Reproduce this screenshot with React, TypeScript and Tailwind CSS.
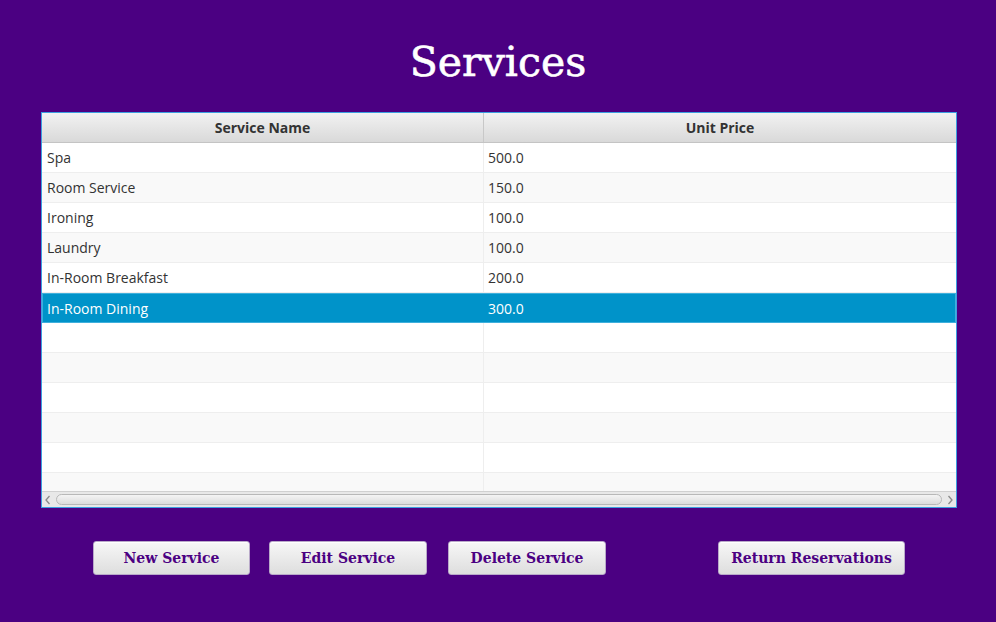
import React from "react";

const services = [
  { name: "Spa", price: "500.0" },
  { name: "Room Service", price: "150.0" },
  { name: "Ironing", price: "100.0" },
  { name: "Laundry", price: "100.0" },
  { name: "In-Room Breakfast", price: "200.0" },
  { name: "In-Room Dining", price: "300.0" },
];

const selected = 5;
const emptyRows = 6;

function ActionButton({ label, className }: { label: string; className?: string }) {
  return (
    <button
      className={
        "h-[34px] rounded-[3px] border border-[#b9a9c9] bg-gradient-to-b from-[#f7f7f7] to-[#dedede] text-[14px] font-bold text-[#4b0082] shadow-[inset_0_1px_0_#ffffff] " +
        (className ?? "")
      }
      style={{ fontFamily: "'DejaVu Serif', serif" }}
    >
      {label}
    </button>
  );
}

function Arrow({ dir }: { dir: "left" | "right" }) {
  return (
    <svg width="8" height="10" viewBox="0 0 8 10" className="shrink-0">
      <path
        d={dir === "left" ? "M5.5 1 L2 5 L5.5 9" : "M2.5 1 L6 5 L2.5 9"}
        fill="none"
        stroke="#8a8a8a"
        strokeWidth="1.3"
      />
    </svg>
  );
}

export default function App() {
  return (
    <div className="w-[996px] h-[622px] bg-[#4b0082] flex flex-col overflow-hidden">
      <h1
        className="text-white text-center text-[41px] leading-none pt-[42px] h-[112px] [-webkit-text-stroke:0.6px_white]"
        style={{ fontFamily: "'DejaVu Serif', serif" }}
      >
        Services
      </h1>

      <div
        className="ml-[41px] w-[916px] h-[396px] border border-[#3c9fe0] bg-white flex flex-col text-[14px] text-[#333]"
        style={{ fontFamily: "'Open Sans', 'Noto Sans', sans-serif" }}
      >
        <div className="flex h-[30px] shrink-0 bg-gradient-to-b from-[#f2f2f2] to-[#d9d9d9] border-b border-[#c4c4c4] font-bold">
          <div className="w-[442px] flex items-center justify-center border-r border-[#c8c8c8]">Service Name</div>
          <div className="flex-1 flex items-center justify-center">Unit Price</div>
        </div>

        <div className="flex-1 overflow-hidden">
          {services.map((s, i) => (
            <div
              key={s.name}
              className={
                i === selected
                  ? "flex h-[30px] bg-[#0093c9] text-white border border-[#3fb0dc]"
                  : i % 2 === 0
                  ? "flex h-[30px] bg-white border-b border-[#eeeeee]"
                  : "flex h-[30px] bg-[#f9f9f9] border-b border-[#eeeeee]"
              }
            >
              <div className={i === selected ? "w-[441px] flex items-center pl-[4px]" : "w-[442px] flex items-center pl-[5px] border-r border-[#eeeeee]"}>
                {s.name}
              </div>
              <div className="flex-1 flex items-center pl-[4px]">{s.price}</div>
            </div>
          ))}
          {Array.from({ length: emptyRows }).map((_, i) => (
            <div
              key={i}
              className={i % 2 === 0 ? "flex h-[30px] bg-white border-b border-[#eeeeee]" : "flex h-[30px] bg-[#f9f9f9] border-b border-[#eeeeee]"}
            >
              <div className="w-[442px] border-r border-[#eeeeee]" />
              <div className="flex-1" />
            </div>
          ))}
        </div>

        <div className="h-[16px] shrink-0 flex items-center bg-[#e8e8e8] border-t border-[#d0d0d0] px-[2px] gap-[4px]">
          <Arrow dir="left" />
          <div className="flex-1 h-[11px] rounded-full border border-[#b8b8b8] bg-gradient-to-b from-[#f4f4f4] to-[#dcdcdc]" />
          <Arrow dir="right" />
        </div>
      </div>

      <div className="flex items-center mt-[33px]">
        <ActionButton label="New Service" className="ml-[93px] w-[157px]" />
        <ActionButton label="Edit Service" className="ml-[19px] w-[158px]" />
        <ActionButton label="Delete Service" className="ml-[21px] w-[158px]" />
        <ActionButton label="Return Reservations" className="ml-[112px] w-[187px]" />
      </div>
    </div>
  );
}
